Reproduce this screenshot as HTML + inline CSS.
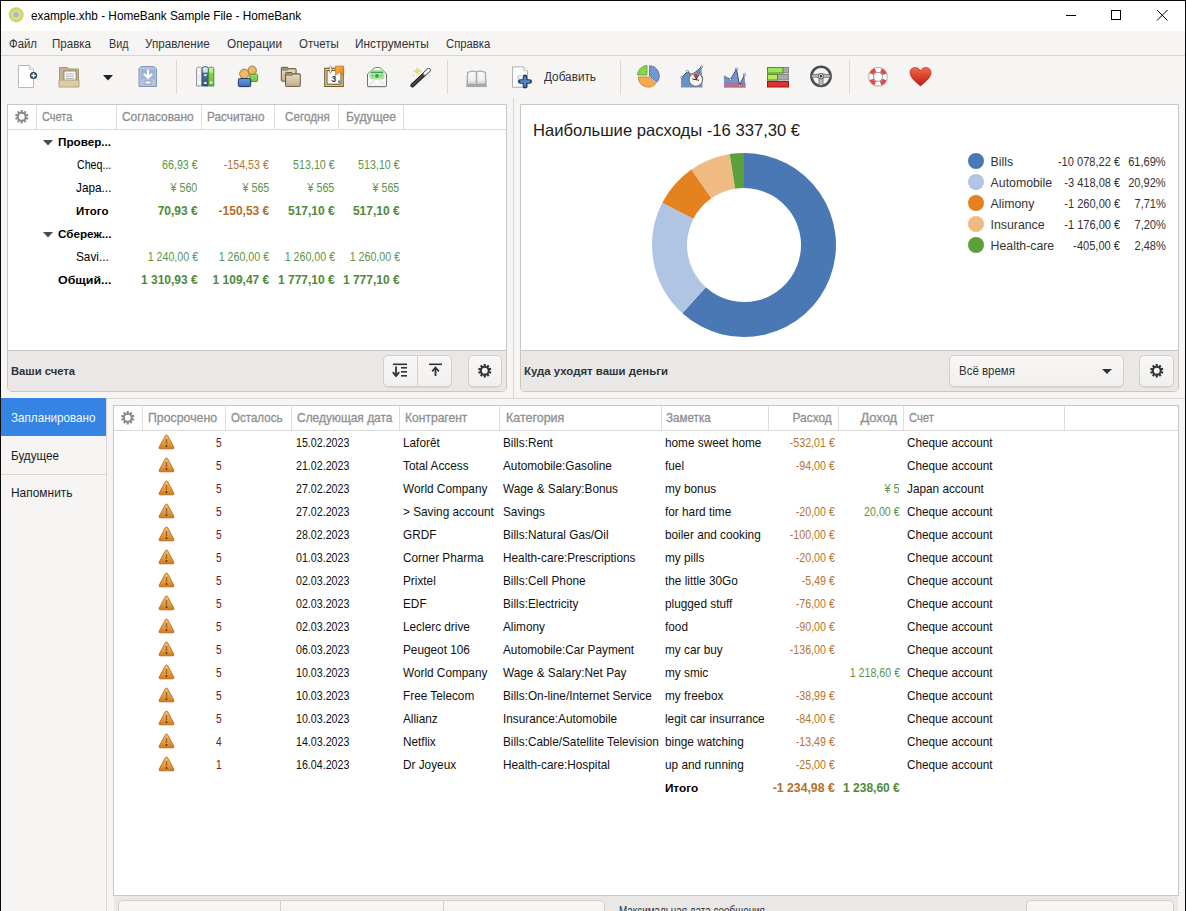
<!DOCTYPE html>
<html><head><meta charset="utf-8"><style>
html,body{margin:0;padding:0;}
body{width:1186px;height:911px;position:relative;overflow:hidden;background:#f6f5f4;font-family:'Liberation Sans', sans-serif;}
.a{position:absolute;}
.t{position:absolute;white-space:nowrap;}
svg.a{overflow:visible;}
</style></head><body>
<div class="a" style="left:0px;top:0px;width:1186px;height:911px;background:#f6f5f4;"></div>
<div class="a" style="left:1px;top:1px;width:1184px;height:30px;background:#ffffff;"></div>
<div class="a" style="left:0px;top:0px;width:1186px;height:1px;background:#0a0a0a;"></div>
<div class="a" style="left:0px;top:0px;width:1px;height:911px;background:#0a0a0a;"></div>
<div class="a" style="left:1185px;top:0px;width:1px;height:911px;background:#0a0a0a;"></div>
<div class="a" style="left:1066px;top:15px;width:10px;height:1px;background:#000;"></div>
<div class="a" style="left:1111px;top:10px;width:10px;height:10px;border:1px solid #000;box-sizing:border-box;"></div>
<svg class="a" style="left:1156px;top:9px" width="13" height="13"><path d="M1 1L11.5 11.5M11.5 1L1 11.5" stroke="#000" stroke-width="1"/></svg>
<div class="a" style="left:1px;top:55px;width:1184px;height:1px;background:#d8d4d0;"></div>
<div class="a" style="left:176px;top:60px;width:1px;height:34px;background:#dddad6;"></div>
<div class="a" style="left:447px;top:60px;width:1px;height:34px;background:#dddad6;"></div>
<div class="a" style="left:620px;top:60px;width:1px;height:34px;background:#dddad6;"></div>
<div class="a" style="left:849px;top:60px;width:1px;height:34px;background:#dddad6;"></div>
<div class="a" style="left:513px;top:98px;width:1px;height:300px;background:#d8d4d0;"></div>
<div class="a" style="left:106px;top:398px;width:1079px;height:1px;background:#d8d4d0;"></div>
<div class="a" style="left:7px;top:104px;width:500px;height:288px;background:#fff;border:1px solid #c9c7c4;box-sizing:border-box;border-radius:0 0 5px 5px;"></div>
<div class="a" style="left:8px;top:350px;width:498px;height:41px;background:#e9e8e7;border-top:1px solid #c9c7c4;box-sizing:border-box;border-radius:0 0 4px 4px"></div>
<div class="a" style="left:8px;top:129px;width:498px;height:1px;background:#d9d9d9;"></div>
<div class="a" style="left:36px;top:105px;width:1px;height:24px;background:#e0dedb;"></div>
<div class="a" style="left:116px;top:105px;width:1px;height:24px;background:#e0dedb;"></div>
<div class="a" style="left:201px;top:105px;width:1px;height:24px;background:#e0dedb;"></div>
<div class="a" style="left:274px;top:105px;width:1px;height:24px;background:#e0dedb;"></div>
<div class="a" style="left:338px;top:105px;width:1px;height:24px;background:#e0dedb;"></div>
<div class="a" style="left:403px;top:105px;width:1px;height:24px;background:#e0dedb;"></div>
<svg class="a" style="left:42.5px;top:140px" width="10" height="5.5"><path d="M0,0 L10,0 L5.0,5.5 Z" fill="#4a4a4a"/></svg>
<svg class="a" style="left:42.5px;top:232px" width="10" height="5.5"><path d="M0,0 L10,0 L5.0,5.5 Z" fill="#4a4a4a"/></svg>
<div class="a" style="left:383px;top:355px;width:69px;height:32px;background:linear-gradient(#f8f7f6,#f1f0ef);border:1px solid #d3cfcb;box-sizing:border-box;border-radius:5px;box-shadow:0 1px 0 rgba(0,0,0,0.07)"></div>
<div class="a" style="left:417px;top:356px;width:1px;height:30px;background:#d3cfcb;"></div>
<div class="a" style="left:468px;top:355px;width:34px;height:32px;background:linear-gradient(#f8f7f6,#f1f0ef);border:1px solid #d3cfcb;box-sizing:border-box;border-radius:5px;box-shadow:0 1px 0 rgba(0,0,0,0.07)"></div>
<div class="a" style="left:520px;top:104px;width:659px;height:288px;background:#fff;border:1px solid #c9c7c4;box-sizing:border-box;border-radius:0 0 5px 5px;"></div>
<div class="a" style="left:521px;top:350px;width:657px;height:41px;background:#e9e8e7;border-top:1px solid #c9c7c4;box-sizing:border-box;border-radius:0 0 4px 4px"></div>
<div class="a" style="left:949px;top:355px;width:175px;height:32px;background:linear-gradient(#f8f7f6,#f1f0ef);border:1px solid #d3cfcb;box-sizing:border-box;border-radius:5px;box-shadow:0 1px 0 rgba(0,0,0,0.07)"></div>
<svg class="a" style="left:1102px;top:369px" width="10" height="5"><path d="M0,0 L10,0 L5,5 Z" fill="#2e3436"/></svg>
<div class="a" style="left:1139px;top:355px;width:35px;height:32px;background:linear-gradient(#f8f7f6,#f1f0ef);border:1px solid #d3cfcb;box-sizing:border-box;border-radius:5px;box-shadow:0 1px 0 rgba(0,0,0,0.07)"></div>
<svg class="a" style="left:652px;top:153px" width="184" height="184"><path d="M92.00,0.00 A92,92 0 1,1 30.34,160.28 L53.80,134.30 A57,57 0 1,0 92.00,35.00 Z" fill="#4a78b4"/><path d="M30.34,160.28 A92,92 0 0,1 10.32,49.67 L41.39,65.77 A57,57 0 0,0 53.80,134.30 Z" fill="#b0c4e4"/><path d="M10.32,49.67 A92,92 0 0,1 39.43,16.50 L59.43,45.22 A57,57 0 0,0 41.39,65.77 Z" fill="#e4821f"/><path d="M39.43,16.50 A92,92 0 0,1 77.72,1.11 L83.15,35.69 A57,57 0 0,0 59.43,45.22 Z" fill="#efbb82"/><path d="M77.72,1.11 A92,92 0 0,1 92.00,0.00 L92.00,35.00 A57,57 0 0,0 83.15,35.69 Z" fill="#5ca03c"/></svg>
<div class="a" style="left:968px;top:152.7px;width:16px;height:16px;background:#4a78b4;border-radius:50%;"></div>
<div class="a" style="left:968px;top:173.79999999999998px;width:16px;height:16px;background:#b0c4e4;border-radius:50%;"></div>
<div class="a" style="left:968px;top:194.89999999999998px;width:16px;height:16px;background:#e4821f;border-radius:50%;"></div>
<div class="a" style="left:968px;top:216.0px;width:16px;height:16px;background:#efbb82;border-radius:50%;"></div>
<div class="a" style="left:968px;top:237.1px;width:16px;height:16px;background:#5ca03c;border-radius:50%;"></div>
<div class="a" style="left:106px;top:399px;width:1px;height:512px;background:#d9d6d2;"></div>
<div class="a" style="left:1px;top:398px;width:105px;height:38px;background:#3584e4;"></div>
<div class="a" style="left:1px;top:474px;width:105px;height:1px;background:#dcd9d5;"></div>
<div class="a" style="left:113px;top:405px;width:1066px;height:491px;background:#fff;border:1px solid #c9c7c4;box-sizing:border-box;"></div>
<div class="a" style="left:114px;top:430px;width:1064px;height:1px;background:#d9d9d9;"></div>
<div class="a" style="left:142px;top:406px;width:1px;height:24px;background:#e0dedb;"></div>
<div class="a" style="left:225px;top:406px;width:1px;height:24px;background:#e0dedb;"></div>
<div class="a" style="left:291px;top:406px;width:1px;height:24px;background:#e0dedb;"></div>
<div class="a" style="left:399px;top:406px;width:1px;height:24px;background:#e0dedb;"></div>
<div class="a" style="left:499px;top:406px;width:1px;height:24px;background:#e0dedb;"></div>
<div class="a" style="left:661px;top:406px;width:1px;height:24px;background:#e0dedb;"></div>
<div class="a" style="left:768px;top:406px;width:1px;height:24px;background:#e0dedb;"></div>
<div class="a" style="left:838px;top:406px;width:1px;height:24px;background:#e0dedb;"></div>
<div class="a" style="left:903px;top:406px;width:1px;height:24px;background:#e0dedb;"></div>
<div class="a" style="left:1064px;top:406px;width:1px;height:24px;background:#e0dedb;"></div>
<svg class="a" style="left:157.5px;top:433.5px" width="17" height="16" viewBox="0 0 17 16">
<defs><linearGradient id="wg" x1="0" y1="0" x2="0" y2="1"><stop offset="0" stop-color="#f7c070"/><stop offset="0.6" stop-color="#e89a3a"/><stop offset="1" stop-color="#d07a20"/></linearGradient></defs>
<path d="M8.5,1 Q9.3,1 9.8,2 L15.8,13.2 Q16.4,14.6 15,14.8 L2,14.8 Q0.6,14.6 1.2,13.2 L7.2,2 Q7.7,1 8.5,1 Z" fill="url(#wg)" stroke="#b8681a" stroke-width="0.9"/>
<rect x="7.8" y="5" width="1.4" height="5" fill="#7a5a3a" opacity="0.8"/><rect x="7.7" y="11.2" width="1.6" height="1.6" fill="#2a2a2a"/></svg>
<svg class="a" style="left:157.5px;top:456.5px" width="17" height="16" viewBox="0 0 17 16">
<defs><linearGradient id="wg" x1="0" y1="0" x2="0" y2="1"><stop offset="0" stop-color="#f7c070"/><stop offset="0.6" stop-color="#e89a3a"/><stop offset="1" stop-color="#d07a20"/></linearGradient></defs>
<path d="M8.5,1 Q9.3,1 9.8,2 L15.8,13.2 Q16.4,14.6 15,14.8 L2,14.8 Q0.6,14.6 1.2,13.2 L7.2,2 Q7.7,1 8.5,1 Z" fill="url(#wg)" stroke="#b8681a" stroke-width="0.9"/>
<rect x="7.8" y="5" width="1.4" height="5" fill="#7a5a3a" opacity="0.8"/><rect x="7.7" y="11.2" width="1.6" height="1.6" fill="#2a2a2a"/></svg>
<svg class="a" style="left:157.5px;top:479.5px" width="17" height="16" viewBox="0 0 17 16">
<defs><linearGradient id="wg" x1="0" y1="0" x2="0" y2="1"><stop offset="0" stop-color="#f7c070"/><stop offset="0.6" stop-color="#e89a3a"/><stop offset="1" stop-color="#d07a20"/></linearGradient></defs>
<path d="M8.5,1 Q9.3,1 9.8,2 L15.8,13.2 Q16.4,14.6 15,14.8 L2,14.8 Q0.6,14.6 1.2,13.2 L7.2,2 Q7.7,1 8.5,1 Z" fill="url(#wg)" stroke="#b8681a" stroke-width="0.9"/>
<rect x="7.8" y="5" width="1.4" height="5" fill="#7a5a3a" opacity="0.8"/><rect x="7.7" y="11.2" width="1.6" height="1.6" fill="#2a2a2a"/></svg>
<svg class="a" style="left:157.5px;top:502.5px" width="17" height="16" viewBox="0 0 17 16">
<defs><linearGradient id="wg" x1="0" y1="0" x2="0" y2="1"><stop offset="0" stop-color="#f7c070"/><stop offset="0.6" stop-color="#e89a3a"/><stop offset="1" stop-color="#d07a20"/></linearGradient></defs>
<path d="M8.5,1 Q9.3,1 9.8,2 L15.8,13.2 Q16.4,14.6 15,14.8 L2,14.8 Q0.6,14.6 1.2,13.2 L7.2,2 Q7.7,1 8.5,1 Z" fill="url(#wg)" stroke="#b8681a" stroke-width="0.9"/>
<rect x="7.8" y="5" width="1.4" height="5" fill="#7a5a3a" opacity="0.8"/><rect x="7.7" y="11.2" width="1.6" height="1.6" fill="#2a2a2a"/></svg>
<svg class="a" style="left:157.5px;top:525.5px" width="17" height="16" viewBox="0 0 17 16">
<defs><linearGradient id="wg" x1="0" y1="0" x2="0" y2="1"><stop offset="0" stop-color="#f7c070"/><stop offset="0.6" stop-color="#e89a3a"/><stop offset="1" stop-color="#d07a20"/></linearGradient></defs>
<path d="M8.5,1 Q9.3,1 9.8,2 L15.8,13.2 Q16.4,14.6 15,14.8 L2,14.8 Q0.6,14.6 1.2,13.2 L7.2,2 Q7.7,1 8.5,1 Z" fill="url(#wg)" stroke="#b8681a" stroke-width="0.9"/>
<rect x="7.8" y="5" width="1.4" height="5" fill="#7a5a3a" opacity="0.8"/><rect x="7.7" y="11.2" width="1.6" height="1.6" fill="#2a2a2a"/></svg>
<svg class="a" style="left:157.5px;top:548.5px" width="17" height="16" viewBox="0 0 17 16">
<defs><linearGradient id="wg" x1="0" y1="0" x2="0" y2="1"><stop offset="0" stop-color="#f7c070"/><stop offset="0.6" stop-color="#e89a3a"/><stop offset="1" stop-color="#d07a20"/></linearGradient></defs>
<path d="M8.5,1 Q9.3,1 9.8,2 L15.8,13.2 Q16.4,14.6 15,14.8 L2,14.8 Q0.6,14.6 1.2,13.2 L7.2,2 Q7.7,1 8.5,1 Z" fill="url(#wg)" stroke="#b8681a" stroke-width="0.9"/>
<rect x="7.8" y="5" width="1.4" height="5" fill="#7a5a3a" opacity="0.8"/><rect x="7.7" y="11.2" width="1.6" height="1.6" fill="#2a2a2a"/></svg>
<svg class="a" style="left:157.5px;top:571.5px" width="17" height="16" viewBox="0 0 17 16">
<defs><linearGradient id="wg" x1="0" y1="0" x2="0" y2="1"><stop offset="0" stop-color="#f7c070"/><stop offset="0.6" stop-color="#e89a3a"/><stop offset="1" stop-color="#d07a20"/></linearGradient></defs>
<path d="M8.5,1 Q9.3,1 9.8,2 L15.8,13.2 Q16.4,14.6 15,14.8 L2,14.8 Q0.6,14.6 1.2,13.2 L7.2,2 Q7.7,1 8.5,1 Z" fill="url(#wg)" stroke="#b8681a" stroke-width="0.9"/>
<rect x="7.8" y="5" width="1.4" height="5" fill="#7a5a3a" opacity="0.8"/><rect x="7.7" y="11.2" width="1.6" height="1.6" fill="#2a2a2a"/></svg>
<svg class="a" style="left:157.5px;top:594.5px" width="17" height="16" viewBox="0 0 17 16">
<defs><linearGradient id="wg" x1="0" y1="0" x2="0" y2="1"><stop offset="0" stop-color="#f7c070"/><stop offset="0.6" stop-color="#e89a3a"/><stop offset="1" stop-color="#d07a20"/></linearGradient></defs>
<path d="M8.5,1 Q9.3,1 9.8,2 L15.8,13.2 Q16.4,14.6 15,14.8 L2,14.8 Q0.6,14.6 1.2,13.2 L7.2,2 Q7.7,1 8.5,1 Z" fill="url(#wg)" stroke="#b8681a" stroke-width="0.9"/>
<rect x="7.8" y="5" width="1.4" height="5" fill="#7a5a3a" opacity="0.8"/><rect x="7.7" y="11.2" width="1.6" height="1.6" fill="#2a2a2a"/></svg>
<svg class="a" style="left:157.5px;top:617.5px" width="17" height="16" viewBox="0 0 17 16">
<defs><linearGradient id="wg" x1="0" y1="0" x2="0" y2="1"><stop offset="0" stop-color="#f7c070"/><stop offset="0.6" stop-color="#e89a3a"/><stop offset="1" stop-color="#d07a20"/></linearGradient></defs>
<path d="M8.5,1 Q9.3,1 9.8,2 L15.8,13.2 Q16.4,14.6 15,14.8 L2,14.8 Q0.6,14.6 1.2,13.2 L7.2,2 Q7.7,1 8.5,1 Z" fill="url(#wg)" stroke="#b8681a" stroke-width="0.9"/>
<rect x="7.8" y="5" width="1.4" height="5" fill="#7a5a3a" opacity="0.8"/><rect x="7.7" y="11.2" width="1.6" height="1.6" fill="#2a2a2a"/></svg>
<svg class="a" style="left:157.5px;top:640.5px" width="17" height="16" viewBox="0 0 17 16">
<defs><linearGradient id="wg" x1="0" y1="0" x2="0" y2="1"><stop offset="0" stop-color="#f7c070"/><stop offset="0.6" stop-color="#e89a3a"/><stop offset="1" stop-color="#d07a20"/></linearGradient></defs>
<path d="M8.5,1 Q9.3,1 9.8,2 L15.8,13.2 Q16.4,14.6 15,14.8 L2,14.8 Q0.6,14.6 1.2,13.2 L7.2,2 Q7.7,1 8.5,1 Z" fill="url(#wg)" stroke="#b8681a" stroke-width="0.9"/>
<rect x="7.8" y="5" width="1.4" height="5" fill="#7a5a3a" opacity="0.8"/><rect x="7.7" y="11.2" width="1.6" height="1.6" fill="#2a2a2a"/></svg>
<svg class="a" style="left:157.5px;top:663.5px" width="17" height="16" viewBox="0 0 17 16">
<defs><linearGradient id="wg" x1="0" y1="0" x2="0" y2="1"><stop offset="0" stop-color="#f7c070"/><stop offset="0.6" stop-color="#e89a3a"/><stop offset="1" stop-color="#d07a20"/></linearGradient></defs>
<path d="M8.5,1 Q9.3,1 9.8,2 L15.8,13.2 Q16.4,14.6 15,14.8 L2,14.8 Q0.6,14.6 1.2,13.2 L7.2,2 Q7.7,1 8.5,1 Z" fill="url(#wg)" stroke="#b8681a" stroke-width="0.9"/>
<rect x="7.8" y="5" width="1.4" height="5" fill="#7a5a3a" opacity="0.8"/><rect x="7.7" y="11.2" width="1.6" height="1.6" fill="#2a2a2a"/></svg>
<svg class="a" style="left:157.5px;top:686.5px" width="17" height="16" viewBox="0 0 17 16">
<defs><linearGradient id="wg" x1="0" y1="0" x2="0" y2="1"><stop offset="0" stop-color="#f7c070"/><stop offset="0.6" stop-color="#e89a3a"/><stop offset="1" stop-color="#d07a20"/></linearGradient></defs>
<path d="M8.5,1 Q9.3,1 9.8,2 L15.8,13.2 Q16.4,14.6 15,14.8 L2,14.8 Q0.6,14.6 1.2,13.2 L7.2,2 Q7.7,1 8.5,1 Z" fill="url(#wg)" stroke="#b8681a" stroke-width="0.9"/>
<rect x="7.8" y="5" width="1.4" height="5" fill="#7a5a3a" opacity="0.8"/><rect x="7.7" y="11.2" width="1.6" height="1.6" fill="#2a2a2a"/></svg>
<svg class="a" style="left:157.5px;top:709.5px" width="17" height="16" viewBox="0 0 17 16">
<defs><linearGradient id="wg" x1="0" y1="0" x2="0" y2="1"><stop offset="0" stop-color="#f7c070"/><stop offset="0.6" stop-color="#e89a3a"/><stop offset="1" stop-color="#d07a20"/></linearGradient></defs>
<path d="M8.5,1 Q9.3,1 9.8,2 L15.8,13.2 Q16.4,14.6 15,14.8 L2,14.8 Q0.6,14.6 1.2,13.2 L7.2,2 Q7.7,1 8.5,1 Z" fill="url(#wg)" stroke="#b8681a" stroke-width="0.9"/>
<rect x="7.8" y="5" width="1.4" height="5" fill="#7a5a3a" opacity="0.8"/><rect x="7.7" y="11.2" width="1.6" height="1.6" fill="#2a2a2a"/></svg>
<svg class="a" style="left:157.5px;top:732.5px" width="17" height="16" viewBox="0 0 17 16">
<defs><linearGradient id="wg" x1="0" y1="0" x2="0" y2="1"><stop offset="0" stop-color="#f7c070"/><stop offset="0.6" stop-color="#e89a3a"/><stop offset="1" stop-color="#d07a20"/></linearGradient></defs>
<path d="M8.5,1 Q9.3,1 9.8,2 L15.8,13.2 Q16.4,14.6 15,14.8 L2,14.8 Q0.6,14.6 1.2,13.2 L7.2,2 Q7.7,1 8.5,1 Z" fill="url(#wg)" stroke="#b8681a" stroke-width="0.9"/>
<rect x="7.8" y="5" width="1.4" height="5" fill="#7a5a3a" opacity="0.8"/><rect x="7.7" y="11.2" width="1.6" height="1.6" fill="#2a2a2a"/></svg>
<svg class="a" style="left:157.5px;top:755.5px" width="17" height="16" viewBox="0 0 17 16">
<defs><linearGradient id="wg" x1="0" y1="0" x2="0" y2="1"><stop offset="0" stop-color="#f7c070"/><stop offset="0.6" stop-color="#e89a3a"/><stop offset="1" stop-color="#d07a20"/></linearGradient></defs>
<path d="M8.5,1 Q9.3,1 9.8,2 L15.8,13.2 Q16.4,14.6 15,14.8 L2,14.8 Q0.6,14.6 1.2,13.2 L7.2,2 Q7.7,1 8.5,1 Z" fill="url(#wg)" stroke="#b8681a" stroke-width="0.9"/>
<rect x="7.8" y="5" width="1.4" height="5" fill="#7a5a3a" opacity="0.8"/><rect x="7.7" y="11.2" width="1.6" height="1.6" fill="#2a2a2a"/></svg>
<div class="a" style="left:114px;top:895px;width:1064px;height:16px;background:#e9e8e7;border-top:1px solid #c9c7c4;box-sizing:border-box"></div>
<div class="a" style="left:117.5px;top:899.5px;width:487.5px;height:20px;background:linear-gradient(#f8f7f6,#f1f0ef);border:1px solid #d3cfcb;box-sizing:border-box;border-radius:5px 5px 0 0;"></div>
<div class="a" style="left:280px;top:900px;width:1px;height:11px;background:#d3cfcb;"></div>
<div class="a" style="left:443px;top:900px;width:1px;height:11px;background:#d3cfcb;"></div>
<div class="a" style="left:1025.7px;top:899.6px;width:148.5999999999999px;height:20px;background:linear-gradient(#f8f7f6,#f1f0ef);border:1px solid #d3cfcb;box-sizing:border-box;border-radius:5px 5px 0 0;"></div>
<svg class="a" style="left:8px;top:7px" width="17" height="17" viewBox="0 0 17 17"><circle cx="8.2" cy="7.8" r="7" fill="#d5d86a" stroke="#c8cc60" stroke-width="1"/><circle cx="8.2" cy="7.8" r="4.2" fill="#e6e8a0"/><circle cx="8.2" cy="7.8" r="3" fill="#b6b2cc"/></svg>
<svg class="a" style="left:17px;top:65px" width="22" height="24" viewBox="0 0 22 24"><path d="M1.5,0.5 L12.5,0.5 L16.5,4.5 L16.5,22.5 L1.5,22.5 Z" fill="#fff" stroke="#b0b0b0" stroke-width="0.9"/><path d="M12.5,0.5 L12.5,4.5 L16.5,4.5" fill="#eee" stroke="#c0c0c0" stroke-width="0.7"/><circle cx="16.5" cy="10.5" r="3.6" fill="#24435f"/><path d="M16.5,8.3V12.7M14.3,10.5H18.7" stroke="#fff" stroke-width="1.4"/></svg>
<svg class="a" style="left:58px;top:66px" width="22" height="22" viewBox="0 0 22 22"><path d="M1.5,1.5 L9.5,1.5 L11,3 L20.5,3 L20.5,20.5 L1.5,20.5 Z" fill="#c4b291" stroke="#a89675" stroke-width="1"/><rect x="6" y="5" width="12" height="10" fill="#fffef9" stroke="#7f7058" stroke-width="0.8"/><path d="M8,8H16M8,10.2H16M8,12.4H16" stroke="#8e8e8e" stroke-width="0.7"/><path d="M1,14 L21,14 L21,21 L1,21 Z" fill="#dccba8" stroke="#b4a27f" stroke-width="1"/></svg>
<svg class="a" style="left:103px;top:75px" width="10" height="6" viewBox="0 0 10 6"><path d="M0,0 L10,0 L5,5.5 Z" fill="#1e1e1e"/></svg>
<svg class="a" style="left:138px;top:65px" width="20" height="23" viewBox="0 0 20 23"><path d="M3,1.5 L16,1.5 L18.5,4 L18.5,21.5 L1,21.5 L1,3.5 Z" fill="#b3c3df" stroke="#8597b6" stroke-width="1"/><rect x="3" y="4.5" width="14" height="9.5" fill="#9fb2d2"/><path d="M10,5.5V12.5M6.5,9.5L10,12.8L13.5,9.5" stroke="#fff" stroke-width="2.2" fill="none" stroke-linecap="round"/><rect x="7" y="16" width="6" height="3" fill="#fff" stroke="#8597b6" stroke-width="0.8"/></svg>
<svg class="a" style="left:195px;top:66px" width="21" height="22" viewBox="0 0 21 22"><defs><linearGradient id="bkb" x1="0" y1="0" x2="0" y2="1"><stop offset="0" stop-color="#e8f0fa"/><stop offset="0.28" stop-color="#c8d8ec"/><stop offset="0.32" stop-color="#4d6f98"/><stop offset="1" stop-color="#3a5a84"/></linearGradient><linearGradient id="bkg" x1="0" y1="0" x2="0" y2="1"><stop offset="0" stop-color="#d8f4c0"/><stop offset="0.28" stop-color="#a8e080"/><stop offset="0.32" stop-color="#86cf55"/><stop offset="1" stop-color="#6ab83e"/></linearGradient></defs><path d="M1.5,20 L1.5,3 Q1.5,1.2 3.5,1.2 L5.5,1.2 Q6.8,1.2 6.8,3 L6.8,20 Z" fill="#ececec" stroke="#8e8e8e" stroke-width="0.9"/><path d="M7.2,20 L7.2,2.5 Q7.2,0.8 9.2,0.8 L11.5,0.8 Q13.3,0.8 13.3,2.5 L13.3,20 Z" fill="url(#bkb)" stroke="#24406a" stroke-width="0.9"/><path d="M13.5,20 L13.5,3 Q13.5,1.2 15.5,1.2 L17.3,1.2 Q18.8,1.2 18.8,3 L18.8,20 Z" fill="url(#bkg)" stroke="#4a8a2a" stroke-width="0.9"/><rect x="2.8" y="2.6" width="2.6" height="1.2" fill="#fff"/><rect x="2.8" y="5.8" width="2.6" height="2.2" fill="#fff"/><rect x="2.8" y="15.5" width="2.6" height="2" fill="#fff"/><rect x="8.8" y="8" width="3" height="2.2" fill="#b8d2f0"/><rect x="8.8" y="16" width="3" height="2" fill="#c8e4fa"/><rect x="14.8" y="15.5" width="2.6" height="2" fill="#e0ffc8"/></svg>
<svg class="a" style="left:237px;top:64px" width="23" height="24" viewBox="0 0 23 24"><defs><radialGradient id="hd" cx="0.45" cy="0.55" r="0.6"><stop offset="0" stop-color="#f6c050"/><stop offset="1" stop-color="#e8b070"/></radialGradient><linearGradient id="bb" x1="0" y1="0" x2="0" y2="1"><stop offset="0" stop-color="#6a9ae0"/><stop offset="1" stop-color="#3a6cc4"/></linearGradient><linearGradient id="gb" x1="0" y1="0" x2="0" y2="1"><stop offset="0" stop-color="#9ae060"/><stop offset="1" stop-color="#6cc830"/></linearGradient></defs><ellipse cx="15.2" cy="6.4" rx="4.2" ry="4.4" fill="url(#hd)" stroke="#8f6a38" stroke-width="0.8"/><rect x="12.8" y="10.2" width="7.8" height="7.3" rx="1" fill="url(#gb)" stroke="#4a8a22" stroke-width="0.9"/><ellipse cx="7.3" cy="9.8" rx="4.7" ry="4.7" fill="url(#hd)" stroke="#8f6a38" stroke-width="0.8"/><rect x="1.4" y="14.6" width="12.3" height="8" rx="1.2" fill="url(#bb)" stroke="#1c365e" stroke-width="1"/></svg>
<svg class="a" style="left:280px;top:66px" width="22" height="22" viewBox="0 0 22 22"><defs><linearGradient id="fg" x1="0" y1="0" x2="0" y2="1"><stop offset="0" stop-color="#e6d8bc"/><stop offset="1" stop-color="#c2b090"/></linearGradient></defs><path d="M1.3,2.3 Q1.3,1.3 2.3,1.3 L7.3,1.3 L8.3,2.6 L15.3,2.6 Q16.1,2.6 16.1,3.5999999999999996 L16.1,14.3 Q16.1,15.200000000000001 15.200000000000001,15.200000000000001 L2.3,15.200000000000001 Q1.3,15.200000000000001 1.3,14.3 Z" fill="#9f8f72" stroke="#5f5240" stroke-width="0.9"/><path d="M2.0,4.8 L7.8,4.8 L8.8,3.5999999999999996 L15.4,3.5999999999999996 L15.4,14.5 L2.0,14.5 Z" fill="url(#fg)"/><path d="M5.5,7.5 Q5.5,6.5 6.5,6.5 L11.5,6.5 L12.5,7.8 L19.5,7.8 Q20.3,7.8 20.3,8.8 L20.3,19.5 Q20.3,20.4 19.4,20.4 L6.5,20.4 Q5.5,20.4 5.5,19.5 Z" fill="#9f8f72" stroke="#5f5240" stroke-width="0.9"/><path d="M6.2,10 L12,10 L13,8.8 L19.6,8.8 L19.6,19.7 L6.2,19.7 Z" fill="url(#fg)"/></svg>
<svg class="a" style="left:323px;top:65px" width="22" height="23" viewBox="0 0 22 23"><defs><linearGradient id="cbm" x1="0" y1="0" x2="1" y2="1"><stop offset="0" stop-color="#f8b848"/><stop offset="1" stop-color="#e87a18"/></linearGradient></defs><rect x="1.8" y="3.3" width="18.4" height="18.1" fill="#f0e2b0" stroke="#6a5020" stroke-width="1.1"/><rect x="4" y="5.5" width="14" height="13.7" fill="#fbfcfa" stroke="#6a5020" stroke-width="1"/><path d="M12.4,1 L20.7,1 L20.7,10.5 L16.6,7.2 L12.4,10.5 Z" fill="url(#cbm)" stroke="#b86a18" stroke-width="0.6"/><ellipse cx="7.5" cy="4.6" rx="1.3" ry="3.6" fill="#f8f4e0" stroke="#6a6a60" stroke-width="0.7"/><text x="8.6" y="16.6" font-family="Liberation Sans" font-size="8.5" font-weight="700" fill="#26344e">3</text><rect x="15" y="15.4" width="2.6" height="2.6" fill="#8a8a8a"/></svg>
<svg class="a" style="left:366px;top:66px" width="23" height="22" viewBox="0 0 23 22"><path d="M1.5,8 L8,2.3 Q9.5,1.5 11,1.5 L12,1.5 Q13.5,1.5 15,2.3 L20.5,8 L20.5,19.5 Q20.5,20.6 19.5,20.6 L2.5,20.6 Q1.5,20.6 1.5,19.5 Z" fill="#fbfbfb" stroke="#6a6a6a" stroke-width="0.9"/><rect x="3.5" y="4" width="15" height="9.5" rx="3.5" fill="#a6e4a2"/><rect x="5" y="5.8" width="12" height="1.1" fill="#3f9a40"/><circle cx="11" cy="9.8" r="1.9" fill="#3f9a40"/><circle cx="6.8" cy="9.8" r="0.6" fill="#2f7a30"/><circle cx="15.2" cy="9.8" r="0.6" fill="#2f7a30"/><path d="M1.5,11.5 L8,16 Q11,17.5 14,16 L20.5,11.5 L20.5,19.5 Q20.5,20.6 19.5,20.6 L2.5,20.6 Q1.5,20.6 1.5,19.5 Z" fill="#f6f6f6"/><path d="M2.5,19.5 L9,14.2 M19.5,19.5 L13,14.2" stroke="#cfcfcf" stroke-width="0.8"/><path d="M1.5,8 L1.5,19.5 Q1.5,20.6 2.5,20.6 L19.5,20.6 Q20.5,20.6 20.5,19.5 L20.5,8" fill="none" stroke="#6a6a6a" stroke-width="0.9"/></svg>
<svg class="a" style="left:409px;top:66px" width="23" height="22" viewBox="0 0 23 22"><path d="M3.3,19.5 L19.8,4" stroke="#1a1a1a" stroke-width="4" stroke-linecap="round"/><path d="M3.3,19.5 L15.5,8" stroke="#4a4a4a" stroke-width="2" stroke-linecap="round"/><path d="M15.8,7.7 L19.8,4" stroke="#6a6a6a" stroke-width="4" stroke-linecap="round"/><path d="M15.8,7.7 L19.8,4" stroke="#fafafa" stroke-width="2.4" stroke-linecap="round"/><path d="M8.5,1.2 Q9,4.3 12.8,5.1 Q9,5.9 8.5,9.2 Q8,5.9 4.2,5.1 Q8,4.3 8.5,1.2 Z" fill="#e6e070" stroke="#d8d080" stroke-width="0.4"/><path d="M4.5,7.8 Q4.7,9.3 6.3,9.6 Q4.7,9.9 4.5,11.4 Q4.3,9.9 2.7,9.6 Q4.3,9.3 4.5,7.8 Z" fill="#e8e490"/><path d="M20.5,8 Q20.7,9.3 22,9.6 Q20.7,9.9 20.5,11.2 Q20.3,9.9 19,9.6 Q20.3,9.3 20.5,8 Z" fill="#c8d8a0"/></svg>
<svg class="a" style="left:465px;top:69px" width="24" height="19" viewBox="0 0 24 19"><defs><linearGradient id="pg" x1="0" y1="0" x2="0" y2="1"><stop offset="0" stop-color="#fafafa"/><stop offset="0.65" stop-color="#f0f0f0"/><stop offset="1" stop-color="#c4c4c4"/></linearGradient></defs><path d="M1.3,17.6 L2,3.2 Q6.5,0.6 11.5,2.2 Q16.5,0.6 21,3.2 L21.7,17.6 Z" fill="#a8a8a8"/><path d="M2.4,15.8 L2.8,3.4 Q7,1.4 11.2,2.8 L11.2,15.8 Q7,14.6 2.4,15.8 Z" fill="url(#pg)" stroke="#9a9a9a" stroke-width="0.7"/><path d="M20.6,15.8 L20.2,3.4 Q16,1.4 11.8,2.8 L11.8,15.8 Q16,14.6 20.6,15.8 Z" fill="url(#pg)" stroke="#9a9a9a" stroke-width="0.7"/><path d="M1.3,17.6 L21.7,17.6" stroke="#9a9a9a" stroke-width="0.8"/></svg>
<svg class="a" style="left:511px;top:66px" width="21" height="23" viewBox="0 0 21 23"><path d="M1.5,0.8 L12.5,0.8 L16.5,4.8 L16.5,21.3 L1.5,21.3 Z" fill="#fbfbfb" stroke="#a9a9a9" stroke-width="0.9"/><path d="M12.5,0.8 L12.5,4.8 L16.5,4.8" fill="#eee" stroke="#b9b9b9" stroke-width="0.7"/><text x="5.5" y="15.5" font-family="Liberation Serif" font-size="11" fill="#bcbcbc">£</text><path d="M14,10.8V20.2M9.3,15.5H18.7" stroke="#1e3c64" stroke-width="4.6" stroke-linecap="round"/><path d="M14,11.5V19.5M10,15.5H18" stroke="#5a86c0" stroke-width="2.4" stroke-linecap="round"/></svg>
<svg class="a" style="left:636px;top:64px" width="25" height="25" viewBox="0 0 25 25"><path d="M11,1.5 A10,10 0 0,0 1.5,11 L11,11 Z" fill="#86d64a" stroke="#5a9a34" stroke-width="0.8"/><path d="M13.5,1.8 A10,10 0 0,1 20.8,18.3 L13.5,12 Z" fill="#6f9ad0" stroke="#4a6890" stroke-width="0.8"/><path d="M2.3,13 L12.8,13 L20,19.4 A10,10 0 0,1 2.3,13 Z" fill="#f6aa4a" stroke="#c08030" stroke-width="0.8"/></svg>
<svg class="a" style="left:680px;top:64px" width="24" height="25" viewBox="0 0 24 25"><path d="M1,13.5 L7.5,7.5 L12,11 L21.5,3 L22.5,23.5 L1,23.5 Z" fill="#6a93c3"/><path d="M1.8,13.5 L7.5,7.5 L12,11 L21.5,3" fill="none" stroke="#2e4a6e" stroke-width="0.9"/><circle cx="1.8" cy="13.5" r="1.1" fill="#fff" stroke="#2e4a6e" stroke-width="0.6"/><circle cx="7.5" cy="7.5" r="1.1" fill="#fff" stroke="#2e4a6e" stroke-width="0.6"/><circle cx="21.5" cy="3" r="1.1" fill="#fff" stroke="#2e4a6e" stroke-width="0.6"/><circle cx="15.8" cy="15.6" r="6.8" fill="#f8f8f8" stroke="#777" stroke-width="1.2"/><path d="M15.8,15.6 L13,10.5 A5.5,5.5 0 0,1 18.5,10.6 Z" fill="#b04a4a"/><path d="M15.8,15.6 L18.8,11 M15.8,15.6 L19,16.3 M12.5,15 L15.8,15.6" stroke="#222" stroke-width="1"/></svg>
<svg class="a" style="left:723px;top:66px" width="25" height="23" viewBox="0 0 25 23"><path d="M1,11 L7.5,13.5 L13.5,3 L16.5,19.5 L21.5,8.5 L22.5,21.5 L1,21.5 Z" fill="#7199d0"/><rect x="1" y="16.5" width="21.5" height="5" fill="#c06a8a" opacity="0.85"/><path d="M2,11 L7.5,13.5 L13.5,3 L16.5,19.5 L21.5,8.5" fill="none" stroke="#2e4a6e" stroke-width="0.9"/><circle cx="2" cy="11" r="1.1" fill="#fff" stroke="#2e4a6e" stroke-width="0.6"/><circle cx="7.5" cy="13.5" r="1.1" fill="#fff" stroke="#2e4a6e" stroke-width="0.6"/><circle cx="13.5" cy="3" r="1.1" fill="#fff" stroke="#2e4a6e" stroke-width="0.6"/><circle cx="16.5" cy="19.5" r="1.1" fill="#fff" stroke="#8a1a3a" stroke-width="0.6"/><circle cx="21.5" cy="8.5" r="1.1" fill="#fff" stroke="#2e4a6e" stroke-width="0.6"/></svg>
<svg class="a" style="left:766px;top:66px" width="24" height="22" viewBox="0 0 24 22"><rect x="1.5" y="1.5" width="21" height="5.5" fill="#a9a9a9" stroke="#777" stroke-width="0.8"/><rect x="1.5" y="1.5" width="15.5" height="5.5" fill="#9be35a" stroke="#4e8f2a" stroke-width="1"/><rect x="1.5" y="8.5" width="21" height="5.5" fill="#a9a9a9" stroke="#777" stroke-width="0.8"/><rect x="1.5" y="8.5" width="10" height="5.5" fill="#b5ea5a" stroke="#4e8f2a" stroke-width="1"/><rect x="1.5" y="15.5" width="21" height="5.5" fill="#e0312a" stroke="#8f1a16" stroke-width="1"/></svg>
<svg class="a" style="left:809px;top:64px" width="24" height="25" viewBox="0 0 24 25"><circle cx="12" cy="12.3" r="9.6" fill="#f3f3f3" stroke="#4c4c4c" stroke-width="2.6"/><path d="M2.5,11 Q12,8.5 21.5,11 L21.5,13.5 Q16,12.5 14,14 L14,21.5 L10,21.5 L10,14 Q8,12.5 2.5,13.5 Z" fill="#bdbdbd" stroke="#5a5a5a" stroke-width="0.7"/><circle cx="12" cy="12.3" r="2.6" fill="#f0f0f0" stroke="#444" stroke-width="0.8"/><circle cx="12" cy="12.3" r="1.2" fill="#333"/></svg>
<svg class="a" style="left:867px;top:65px" width="23" height="24" viewBox="0 0 23 24"><circle cx="11" cy="11.8" r="9.3" fill="#fff" stroke="#999" stroke-width="0.8"/><circle cx="11" cy="11.8" r="7.2" fill="none" stroke="#e04a4a" stroke-width="4.4" stroke-dasharray="5.655 5.655" stroke-dashoffset="-2.83" transform="rotate(0 11 11.8)"/><circle cx="11" cy="11.8" r="4.5" fill="#fff" stroke="#7a7a7a" stroke-width="0.8"/><circle cx="11" cy="11.8" r="10" fill="none" stroke="#f2c890" stroke-width="0.6" opacity="0.6"/></svg>
<svg class="a" style="left:909px;top:66px" width="24" height="22" viewBox="0 0 24 22"><defs><linearGradient id="hg" x1="0" y1="0" x2="0" y2="1"><stop offset="0" stop-color="#f06a4a"/><stop offset="1" stop-color="#c01a10"/></linearGradient></defs><path d="M11.5,20 C5,14.5 1,11 1,6.5 C1,3 3.5,1.5 6.2,1.5 C8.8,1.5 10.5,3.2 11.5,4.8 C12.5,3.2 14.2,1.5 16.8,1.5 C19.5,1.5 22,3 22,6.5 C22,11 18,14.5 11.5,20 Z" fill="url(#hg)" stroke="#a8201a" stroke-width="0.6"/></svg>
<svg class="a" style="left:392px;top:363px" width="16" height="16" viewBox="0 0 16 16"><rect x="1" y="0.5" width="14" height="1.6" fill="#2e3436"/><path d="M4,3.5V12" stroke="#2e3436" stroke-width="1.8"/><path d="M0.8,9.2L4,13L7.2,9.2" fill="none" stroke="#2e3436" stroke-width="1.8"/><rect x="9" y="4" width="6" height="1.6" fill="#2e3436"/><rect x="9" y="8" width="6" height="1.6" fill="#2e3436"/><rect x="9" y="12" width="6" height="1.6" fill="#2e3436"/></svg>
<svg class="a" style="left:428px;top:363px" width="16" height="16" viewBox="0 0 16 16"><rect x="1" y="0.5" width="13" height="1.6" fill="#2e3436"/><path d="M7.5,5V13" stroke="#2e3436" stroke-width="1.8"/><path d="M4.2,8.3L7.5,4.5L10.8,8.3" fill="none" stroke="#2e3436" stroke-width="1.8"/></svg>
<div class="t" style="top:9px;font-size:12px;color:#000;left:31.00px;transform:scaleX(0.983);transform-origin:0 0;">example.xhb - HomeBank Sample File - HomeBank</div>
<div class="t" style="top:37px;font-size:12px;color:#2e3436;left:8.50px;transform:scaleX(0.949);transform-origin:0 0;">Файл</div>
<div class="t" style="top:37px;font-size:12px;color:#2e3436;left:52.30px;transform:scaleX(0.962);transform-origin:0 0;">Правка</div>
<div class="t" style="top:37px;font-size:12px;color:#2e3436;left:108.60px;transform:scaleX(0.893);transform-origin:0 0;">Вид</div>
<div class="t" style="top:37px;font-size:12px;color:#2e3436;left:145.00px;transform:scaleX(0.971);transform-origin:0 0;">Управление</div>
<div class="t" style="top:37px;font-size:12px;color:#2e3436;left:226.50px;transform:scaleX(0.980);transform-origin:0 0;">Операции</div>
<div class="t" style="top:37px;font-size:12px;color:#2e3436;left:298.60px;transform:scaleX(0.955);transform-origin:0 0;">Отчеты</div>
<div class="t" style="top:37px;font-size:12px;color:#2e3436;left:355.40px;transform:scaleX(0.984);transform-origin:0 0;">Инструменты</div>
<div class="t" style="top:37px;font-size:12px;color:#2e3436;left:446.30px;transform:scaleX(0.939);transform-origin:0 0;">Справка</div>
<div class="t" style="top:70px;font-size:12px;color:#2e3436;left:544.00px;transform:scaleX(0.980);transform-origin:0 0;">Добавить</div>
<div class="t" style="top:110px;font-size:12.4px;color:#8f8f8f;-webkit-text-stroke:0.3px #8f8f8f;left:42.40px;transform:scaleX(0.890);transform-origin:0 0;">Счета</div>
<div class="t" style="top:110px;font-size:12.4px;color:#8f8f8f;-webkit-text-stroke:0.3px #8f8f8f;left:122.00px;transform:scaleX(0.962);transform-origin:0 0;">Согласовано</div>
<div class="t" style="top:110px;font-size:12.4px;color:#8f8f8f;-webkit-text-stroke:0.3px #8f8f8f;left:207.20px;transform:scaleX(0.952);transform-origin:0 0;">Расчитано</div>
<div class="t" style="top:110px;font-size:12.4px;color:#8f8f8f;-webkit-text-stroke:0.3px #8f8f8f;left:285.40px;transform:scaleX(0.945);transform-origin:0 0;">Сегодня</div>
<div class="t" style="top:110px;font-size:12.4px;color:#8f8f8f;-webkit-text-stroke:0.3px #8f8f8f;left:346.40px;transform:scaleX(0.984);transform-origin:0 0;">Будущее</div>
<div class="t" style="top:135px;font-size:11.8px;color:#000;font-weight:700;left:58.30px;transform:scaleX(0.991);transform-origin:0 0;">Провер...</div>
<div class="t" style="top:158px;font-size:12.4px;color:#000;left:76.60px;transform:scaleX(0.859);transform-origin:0 0;">Cheq...</div>
<div class="t" style="top:158px;font-size:12.5px;color:#5c9448;left:155.98px;transform:scaleX(0.854);transform-origin:100% 0;">66,93 €</div>
<div class="t" style="top:158px;font-size:12.5px;color:#b5762f;left:216.47px;transform:scaleX(0.854);transform-origin:100% 0;">-154,53 €</div>
<div class="t" style="top:158px;font-size:12.5px;color:#5c9448;left:286.03px;transform:scaleX(0.854);transform-origin:100% 0;">513,10 €</div>
<div class="t" style="top:158px;font-size:12.5px;color:#5c9448;left:350.93px;transform:scaleX(0.854);transform-origin:100% 0;">513,10 €</div>
<div class="t" style="top:181px;font-size:12.4px;color:#000;left:75.70px;transform:scaleX(0.952);transform-origin:0 0;">Japa...</div>
<div class="t" style="top:181px;font-size:12.5px;color:#5c9448;left:166.42px;transform:scaleX(0.854);transform-origin:100% 0;">¥ 560</div>
<div class="t" style="top:181px;font-size:12.5px;color:#5c9448;left:238.02px;transform:scaleX(0.854);transform-origin:100% 0;">¥ 565</div>
<div class="t" style="top:181px;font-size:12.5px;color:#5c9448;left:303.42px;transform:scaleX(0.854);transform-origin:100% 0;">¥ 565</div>
<div class="t" style="top:181px;font-size:12.5px;color:#5c9448;left:368.32px;transform:scaleX(0.854);transform-origin:100% 0;">¥ 565</div>
<div class="t" style="top:204px;font-size:11.8px;color:#000;font-weight:700;left:76.20px;transform:scaleX(0.974);transform-origin:0 0;">Итого</div>
<div class="t" style="top:204px;font-size:12px;color:#4f8a3b;font-weight:700;left:157.65px;">70,93 €</div>
<div class="t" style="top:204px;font-size:12px;color:#b0702c;font-weight:700;left:218.58px;">-150,53 €</div>
<div class="t" style="top:204px;font-size:12px;color:#4f8a3b;font-weight:700;left:287.98px;">517,10 €</div>
<div class="t" style="top:204px;font-size:12px;color:#4f8a3b;font-weight:700;left:352.88px;">517,10 €</div>
<div class="t" style="top:227px;font-size:11.8px;color:#000;font-weight:700;left:58.20px;transform:scaleX(0.988);transform-origin:0 0;">Сбереж...</div>
<div class="t" style="top:250px;font-size:12.4px;color:#000;left:76.20px;transform:scaleX(0.952);transform-origin:0 0;">Savi...</div>
<div class="t" style="top:250px;font-size:12.5px;color:#5c9448;left:138.61px;transform:scaleX(0.854);transform-origin:100% 0;">1 240,00 €</div>
<div class="t" style="top:250px;font-size:12.5px;color:#5c9448;left:210.21px;transform:scaleX(0.854);transform-origin:100% 0;">1 260,00 €</div>
<div class="t" style="top:250px;font-size:12.5px;color:#5c9448;left:275.61px;transform:scaleX(0.854);transform-origin:100% 0;">1 260,00 €</div>
<div class="t" style="top:250px;font-size:12.5px;color:#5c9448;left:340.51px;transform:scaleX(0.854);transform-origin:100% 0;">1 260,00 €</div>
<div class="t" style="top:273px;font-size:11.8px;color:#000;font-weight:700;left:58.20px;transform:scaleX(1.052);transform-origin:0 0;">Общий...</div>
<div class="t" style="top:273px;font-size:12px;color:#4f8a3b;font-weight:700;left:140.98px;">1 310,93 €</div>
<div class="t" style="top:273px;font-size:12px;color:#4f8a3b;font-weight:700;left:212.58px;">1 109,47 €</div>
<div class="t" style="top:273px;font-size:12px;color:#4f8a3b;font-weight:700;left:277.98px;">1 777,10 €</div>
<div class="t" style="top:273px;font-size:12px;color:#4f8a3b;font-weight:700;left:342.88px;">1 777,10 €</div>
<div class="t" style="top:365px;font-size:11.5px;color:#2e3436;font-weight:700;left:10.80px;transform:scaleX(0.977);transform-origin:0 0;">Ваши счета</div>
<div class="t" style="top:121px;font-size:16.5px;color:#1c1c1c;left:533.30px;transform:scaleX(1.007);transform-origin:0 0;">Наибольшие расходы -16 337,30 €</div>
<div class="t" style="top:365px;font-size:11.5px;color:#2e3436;font-weight:700;left:523.80px;transform:scaleX(0.992);transform-origin:0 0;">Куда уходят ваши деньги</div>
<div class="t" style="top:364px;font-size:12.4px;color:#2e3436;left:959.30px;transform:scaleX(0.927);transform-origin:0 0;">Всё время</div>
<div class="t" style="top:155px;font-size:12.3px;color:#333;left:990.60px;">Bills</div>
<div class="t" style="top:155px;font-size:12.3px;color:#333;left:1050.94px;transform:scaleX(0.900);transform-origin:100% 0;">-10 078,22 €</div>
<div class="t" style="top:155px;font-size:12.3px;color:#333;left:1124.28px;transform:scaleX(0.900);transform-origin:100% 0;">61,69%</div>
<div class="t" style="top:176px;font-size:12.3px;color:#333;left:990.60px;">Automobile</div>
<div class="t" style="top:176px;font-size:12.3px;color:#333;left:1057.78px;transform:scaleX(0.900);transform-origin:100% 0;">-3 418,08 €</div>
<div class="t" style="top:176px;font-size:12.3px;color:#333;left:1124.28px;transform:scaleX(0.900);transform-origin:100% 0;">20,92%</div>
<div class="t" style="top:197px;font-size:12.3px;color:#333;left:990.60px;">Alimony</div>
<div class="t" style="top:197px;font-size:12.3px;color:#333;left:1057.78px;transform:scaleX(0.900);transform-origin:100% 0;">-1 260,00 €</div>
<div class="t" style="top:197px;font-size:12.3px;color:#333;left:1131.12px;transform:scaleX(0.900);transform-origin:100% 0;">7,71%</div>
<div class="t" style="top:218px;font-size:12.3px;color:#333;left:990.60px;">Insurance</div>
<div class="t" style="top:218px;font-size:12.3px;color:#333;left:1057.78px;transform:scaleX(0.900);transform-origin:100% 0;">-1 176,00 €</div>
<div class="t" style="top:218px;font-size:12.3px;color:#333;left:1131.12px;transform:scaleX(0.900);transform-origin:100% 0;">7,20%</div>
<div class="t" style="top:239px;font-size:12.3px;color:#333;left:990.60px;">Health-care</div>
<div class="t" style="top:239px;font-size:12.3px;color:#333;left:1068.03px;transform:scaleX(0.900);transform-origin:100% 0;">-405,00 €</div>
<div class="t" style="top:239px;font-size:12.3px;color:#333;left:1131.12px;transform:scaleX(0.900);transform-origin:100% 0;">2,48%</div>
<div class="t" style="top:411px;font-size:12.4px;color:#f4f9ff;left:10.70px;transform:scaleX(0.941);transform-origin:0 0;">Запланировано</div>
<div class="t" style="top:449px;font-size:12.4px;color:#1a1a1a;left:10.70px;transform:scaleX(0.943);transform-origin:0 0;">Будущее</div>
<div class="t" style="top:486px;font-size:12.4px;color:#1a1a1a;left:10.70px;transform:scaleX(0.963);transform-origin:0 0;">Напомнить</div>
<div class="t" style="top:411px;font-size:12.4px;color:#8f8f8f;-webkit-text-stroke:0.3px #8f8f8f;left:148.40px;transform:scaleX(0.994);transform-origin:0 0;">Просрочено</div>
<div class="t" style="top:411px;font-size:12.4px;color:#8f8f8f;-webkit-text-stroke:0.3px #8f8f8f;left:231.40px;transform:scaleX(0.932);transform-origin:0 0;">Осталось</div>
<div class="t" style="top:411px;font-size:12.4px;color:#8f8f8f;-webkit-text-stroke:0.3px #8f8f8f;left:296.50px;transform:scaleX(0.964);transform-origin:0 0;">Следующая дата</div>
<div class="t" style="top:411px;font-size:12.4px;color:#8f8f8f;-webkit-text-stroke:0.3px #8f8f8f;left:405.30px;transform:scaleX(0.974);transform-origin:0 0;">Контрагент</div>
<div class="t" style="top:411px;font-size:12.4px;color:#8f8f8f;-webkit-text-stroke:0.3px #8f8f8f;left:505.50px;transform:scaleX(1.006);transform-origin:0 0;">Категория</div>
<div class="t" style="top:411px;font-size:12.4px;color:#8f8f8f;-webkit-text-stroke:0.3px #8f8f8f;left:666.40px;transform:scaleX(0.940);transform-origin:0 0;">Заметка</div>
<div class="t" style="top:411px;font-size:12.4px;color:#8f8f8f;-webkit-text-stroke:0.3px #8f8f8f;left:790.86px;transform:scaleX(0.965);transform-origin:100% 0;">Расход</div>
<div class="t" style="top:411px;font-size:12.4px;color:#8f8f8f;-webkit-text-stroke:0.3px #8f8f8f;left:861.61px;transform:scaleX(1.046);transform-origin:100% 0;">Доход</div>
<div class="t" style="top:411px;font-size:12.4px;color:#8f8f8f;-webkit-text-stroke:0.3px #8f8f8f;left:909.10px;transform:scaleX(0.908);transform-origin:0 0;">Счет</div>
<div class="t" style="top:436px;font-size:12px;color:#6a2020;left:215.11px;transform:scaleX(0.850);transform-origin:100% 0;">5</div>
<div class="t" style="top:436px;font-size:12.5px;color:#111;left:295.90px;transform:scaleX(0.854);transform-origin:0 0;">15.02.2023</div>
<div class="t" style="top:436px;font-size:12.4px;color:#111;left:403.10px;transform:scaleX(0.952);transform-origin:0 0;">Laforêt</div>
<div class="t" style="top:436px;font-size:12.4px;color:#111;left:503.30px;transform:scaleX(0.952);transform-origin:0 0;">Bills:Rent</div>
<div class="t" style="top:436px;font-size:12.4px;color:#111;left:664.50px;transform:scaleX(0.952);transform-origin:0 0;">home sweet home</div>
<div class="t" style="top:436px;font-size:12.5px;color:#b5762f;left:781.97px;transform:scaleX(0.854);transform-origin:100% 0;">-532,01 €</div>
<div class="t" style="top:436px;font-size:12.4px;color:#111;left:907.40px;transform:scaleX(0.948);transform-origin:0 0;">Cheque account</div>
<div class="t" style="top:459px;font-size:12px;color:#6a2020;left:215.11px;transform:scaleX(0.850);transform-origin:100% 0;">5</div>
<div class="t" style="top:459px;font-size:12.5px;color:#111;left:295.90px;transform:scaleX(0.854);transform-origin:0 0;">21.02.2023</div>
<div class="t" style="top:459px;font-size:12.4px;color:#111;left:403.10px;transform:scaleX(0.952);transform-origin:0 0;">Total Access</div>
<div class="t" style="top:459px;font-size:12.4px;color:#111;left:503.30px;transform:scaleX(0.952);transform-origin:0 0;">Automobile:Gasoline</div>
<div class="t" style="top:459px;font-size:12.4px;color:#111;left:664.50px;transform:scaleX(0.952);transform-origin:0 0;">fuel</div>
<div class="t" style="top:459px;font-size:12.5px;color:#b5762f;left:788.92px;transform:scaleX(0.854);transform-origin:100% 0;">-94,00 €</div>
<div class="t" style="top:459px;font-size:12.4px;color:#111;left:907.40px;transform:scaleX(0.948);transform-origin:0 0;">Cheque account</div>
<div class="t" style="top:482px;font-size:12px;color:#6a2020;left:215.11px;transform:scaleX(0.850);transform-origin:100% 0;">5</div>
<div class="t" style="top:482px;font-size:12.5px;color:#111;left:295.90px;transform:scaleX(0.854);transform-origin:0 0;">27.02.2023</div>
<div class="t" style="top:482px;font-size:12.4px;color:#111;left:403.10px;transform:scaleX(0.952);transform-origin:0 0;">World Company</div>
<div class="t" style="top:482px;font-size:12.4px;color:#111;left:503.30px;transform:scaleX(0.952);transform-origin:0 0;">Wage &amp; Salary:Bonus</div>
<div class="t" style="top:482px;font-size:12.4px;color:#111;left:664.50px;transform:scaleX(0.952);transform-origin:0 0;">my bonus</div>
<div class="t" style="top:482px;font-size:12.5px;color:#5c9448;left:882.41px;transform:scaleX(0.854);transform-origin:100% 0;">¥ 5</div>
<div class="t" style="top:482px;font-size:12.4px;color:#111;left:907.40px;transform:scaleX(0.952);transform-origin:0 0;">Japan account</div>
<div class="t" style="top:505px;font-size:12px;color:#6a2020;left:215.11px;transform:scaleX(0.850);transform-origin:100% 0;">5</div>
<div class="t" style="top:505px;font-size:12.5px;color:#111;left:295.90px;transform:scaleX(0.854);transform-origin:0 0;">27.02.2023</div>
<div class="t" style="top:505px;font-size:12.4px;color:#111;left:403.10px;transform:scaleX(0.952);transform-origin:0 0;">&gt; Saving account</div>
<div class="t" style="top:505px;font-size:12.4px;color:#111;left:503.30px;transform:scaleX(0.952);transform-origin:0 0;">Savings</div>
<div class="t" style="top:505px;font-size:12.4px;color:#111;left:664.50px;transform:scaleX(0.952);transform-origin:0 0;">for hard time</div>
<div class="t" style="top:505px;font-size:12.5px;color:#b5762f;left:788.92px;transform:scaleX(0.854);transform-origin:100% 0;">-20,00 €</div>
<div class="t" style="top:505px;font-size:12.5px;color:#5c9448;left:858.08px;transform:scaleX(0.854);transform-origin:100% 0;">20,00 €</div>
<div class="t" style="top:505px;font-size:12.4px;color:#111;left:907.40px;transform:scaleX(0.948);transform-origin:0 0;">Cheque account</div>
<div class="t" style="top:528px;font-size:12px;color:#6a2020;left:215.11px;transform:scaleX(0.850);transform-origin:100% 0;">5</div>
<div class="t" style="top:528px;font-size:12.5px;color:#111;left:295.90px;transform:scaleX(0.854);transform-origin:0 0;">28.02.2023</div>
<div class="t" style="top:528px;font-size:12.4px;color:#111;left:403.10px;transform:scaleX(0.952);transform-origin:0 0;">GRDF</div>
<div class="t" style="top:528px;font-size:12.4px;color:#111;left:503.30px;transform:scaleX(0.952);transform-origin:0 0;">Bills:Natural Gas/Oil</div>
<div class="t" style="top:528px;font-size:12.4px;color:#111;left:664.50px;transform:scaleX(0.952);transform-origin:0 0;">boiler and cooking</div>
<div class="t" style="top:528px;font-size:12.5px;color:#b5762f;left:781.97px;transform:scaleX(0.854);transform-origin:100% 0;">-100,00 €</div>
<div class="t" style="top:528px;font-size:12.4px;color:#111;left:907.40px;transform:scaleX(0.948);transform-origin:0 0;">Cheque account</div>
<div class="t" style="top:551px;font-size:12px;color:#6a2020;left:215.11px;transform:scaleX(0.850);transform-origin:100% 0;">5</div>
<div class="t" style="top:551px;font-size:12.5px;color:#111;left:295.90px;transform:scaleX(0.854);transform-origin:0 0;">01.03.2023</div>
<div class="t" style="top:551px;font-size:12.4px;color:#111;left:403.10px;transform:scaleX(0.952);transform-origin:0 0;">Corner Pharma</div>
<div class="t" style="top:551px;font-size:12.4px;color:#111;left:503.30px;transform:scaleX(0.952);transform-origin:0 0;">Health-care:Prescriptions</div>
<div class="t" style="top:551px;font-size:12.4px;color:#111;left:664.50px;transform:scaleX(0.952);transform-origin:0 0;">my pills</div>
<div class="t" style="top:551px;font-size:12.5px;color:#b5762f;left:788.92px;transform:scaleX(0.854);transform-origin:100% 0;">-20,00 €</div>
<div class="t" style="top:551px;font-size:12.4px;color:#111;left:907.40px;transform:scaleX(0.948);transform-origin:0 0;">Cheque account</div>
<div class="t" style="top:574px;font-size:12px;color:#6a2020;left:215.11px;transform:scaleX(0.850);transform-origin:100% 0;">5</div>
<div class="t" style="top:574px;font-size:12.5px;color:#111;left:295.90px;transform:scaleX(0.854);transform-origin:0 0;">02.03.2023</div>
<div class="t" style="top:574px;font-size:12.4px;color:#111;left:403.10px;transform:scaleX(0.952);transform-origin:0 0;">Prixtel</div>
<div class="t" style="top:574px;font-size:12.4px;color:#111;left:503.30px;transform:scaleX(0.952);transform-origin:0 0;">Bills:Cell Phone</div>
<div class="t" style="top:574px;font-size:12.4px;color:#111;left:664.50px;transform:scaleX(0.952);transform-origin:0 0;">the little 30Go</div>
<div class="t" style="top:574px;font-size:12.5px;color:#b5762f;left:795.88px;transform:scaleX(0.854);transform-origin:100% 0;">-5,49 €</div>
<div class="t" style="top:574px;font-size:12.4px;color:#111;left:907.40px;transform:scaleX(0.948);transform-origin:0 0;">Cheque account</div>
<div class="t" style="top:597px;font-size:12px;color:#6a2020;left:215.11px;transform:scaleX(0.850);transform-origin:100% 0;">5</div>
<div class="t" style="top:597px;font-size:12.5px;color:#111;left:295.90px;transform:scaleX(0.854);transform-origin:0 0;">02.03.2023</div>
<div class="t" style="top:597px;font-size:12.4px;color:#111;left:403.10px;transform:scaleX(0.952);transform-origin:0 0;">EDF</div>
<div class="t" style="top:597px;font-size:12.4px;color:#111;left:503.30px;transform:scaleX(0.952);transform-origin:0 0;">Bills:Electricity</div>
<div class="t" style="top:597px;font-size:12.4px;color:#111;left:664.50px;transform:scaleX(0.952);transform-origin:0 0;">plugged stuff</div>
<div class="t" style="top:597px;font-size:12.5px;color:#b5762f;left:788.92px;transform:scaleX(0.854);transform-origin:100% 0;">-76,00 €</div>
<div class="t" style="top:597px;font-size:12.4px;color:#111;left:907.40px;transform:scaleX(0.948);transform-origin:0 0;">Cheque account</div>
<div class="t" style="top:620px;font-size:12px;color:#6a2020;left:215.11px;transform:scaleX(0.850);transform-origin:100% 0;">5</div>
<div class="t" style="top:620px;font-size:12.5px;color:#111;left:295.90px;transform:scaleX(0.854);transform-origin:0 0;">02.03.2023</div>
<div class="t" style="top:620px;font-size:12.4px;color:#111;left:403.10px;transform:scaleX(0.952);transform-origin:0 0;">Leclerc drive</div>
<div class="t" style="top:620px;font-size:12.4px;color:#111;left:503.30px;transform:scaleX(0.952);transform-origin:0 0;">Alimony</div>
<div class="t" style="top:620px;font-size:12.4px;color:#111;left:664.50px;transform:scaleX(0.952);transform-origin:0 0;">food</div>
<div class="t" style="top:620px;font-size:12.5px;color:#b5762f;left:788.92px;transform:scaleX(0.854);transform-origin:100% 0;">-90,00 €</div>
<div class="t" style="top:620px;font-size:12.4px;color:#111;left:907.40px;transform:scaleX(0.948);transform-origin:0 0;">Cheque account</div>
<div class="t" style="top:643px;font-size:12px;color:#6a2020;left:215.11px;transform:scaleX(0.850);transform-origin:100% 0;">5</div>
<div class="t" style="top:643px;font-size:12.5px;color:#111;left:295.90px;transform:scaleX(0.854);transform-origin:0 0;">06.03.2023</div>
<div class="t" style="top:643px;font-size:12.4px;color:#111;left:403.10px;transform:scaleX(0.952);transform-origin:0 0;">Peugeot 106</div>
<div class="t" style="top:643px;font-size:12.4px;color:#111;left:503.30px;transform:scaleX(0.952);transform-origin:0 0;">Automobile:Car Payment</div>
<div class="t" style="top:643px;font-size:12.4px;color:#111;left:664.50px;transform:scaleX(0.952);transform-origin:0 0;">my car buy</div>
<div class="t" style="top:643px;font-size:12.5px;color:#b5762f;left:781.97px;transform:scaleX(0.854);transform-origin:100% 0;">-136,00 €</div>
<div class="t" style="top:643px;font-size:12.4px;color:#111;left:907.40px;transform:scaleX(0.948);transform-origin:0 0;">Cheque account</div>
<div class="t" style="top:666px;font-size:12px;color:#6a2020;left:215.11px;transform:scaleX(0.850);transform-origin:100% 0;">5</div>
<div class="t" style="top:666px;font-size:12.5px;color:#111;left:295.90px;transform:scaleX(0.854);transform-origin:0 0;">10.03.2023</div>
<div class="t" style="top:666px;font-size:12.4px;color:#111;left:403.10px;transform:scaleX(0.952);transform-origin:0 0;">World Company</div>
<div class="t" style="top:666px;font-size:12.4px;color:#111;left:503.30px;transform:scaleX(0.952);transform-origin:0 0;">Wage &amp; Salary:Net Pay</div>
<div class="t" style="top:666px;font-size:12.4px;color:#111;left:664.50px;transform:scaleX(0.952);transform-origin:0 0;">my smic</div>
<div class="t" style="top:666px;font-size:12.5px;color:#5c9448;left:840.71px;transform:scaleX(0.854);transform-origin:100% 0;">1 218,60 €</div>
<div class="t" style="top:666px;font-size:12.4px;color:#111;left:907.40px;transform:scaleX(0.948);transform-origin:0 0;">Cheque account</div>
<div class="t" style="top:689px;font-size:12px;color:#6a2020;left:215.11px;transform:scaleX(0.850);transform-origin:100% 0;">5</div>
<div class="t" style="top:689px;font-size:12.5px;color:#111;left:295.90px;transform:scaleX(0.854);transform-origin:0 0;">10.03.2023</div>
<div class="t" style="top:689px;font-size:12.4px;color:#111;left:403.10px;transform:scaleX(0.952);transform-origin:0 0;">Free Telecom</div>
<div class="t" style="top:689px;font-size:12.4px;color:#111;left:503.30px;transform:scaleX(0.952);transform-origin:0 0;">Bills:On-line/Internet Service</div>
<div class="t" style="top:689px;font-size:12.4px;color:#111;left:664.50px;transform:scaleX(0.952);transform-origin:0 0;">my freebox</div>
<div class="t" style="top:689px;font-size:12.5px;color:#b5762f;left:788.92px;transform:scaleX(0.854);transform-origin:100% 0;">-38,99 €</div>
<div class="t" style="top:689px;font-size:12.4px;color:#111;left:907.40px;transform:scaleX(0.948);transform-origin:0 0;">Cheque account</div>
<div class="t" style="top:712px;font-size:12px;color:#6a2020;left:215.11px;transform:scaleX(0.850);transform-origin:100% 0;">5</div>
<div class="t" style="top:712px;font-size:12.5px;color:#111;left:295.90px;transform:scaleX(0.854);transform-origin:0 0;">10.03.2023</div>
<div class="t" style="top:712px;font-size:12.4px;color:#111;left:403.10px;transform:scaleX(0.952);transform-origin:0 0;">Allianz</div>
<div class="t" style="top:712px;font-size:12.4px;color:#111;left:503.30px;transform:scaleX(0.952);transform-origin:0 0;">Insurance:Automobile</div>
<div class="t" style="top:712px;font-size:12.4px;color:#111;left:664.50px;transform:scaleX(0.952);transform-origin:0 0;">legit car insurrance</div>
<div class="t" style="top:712px;font-size:12.5px;color:#b5762f;left:788.92px;transform:scaleX(0.854);transform-origin:100% 0;">-84,00 €</div>
<div class="t" style="top:712px;font-size:12.4px;color:#111;left:907.40px;transform:scaleX(0.948);transform-origin:0 0;">Cheque account</div>
<div class="t" style="top:735px;font-size:12px;color:#6a2020;left:215.11px;transform:scaleX(0.850);transform-origin:100% 0;">4</div>
<div class="t" style="top:735px;font-size:12.5px;color:#111;left:295.90px;transform:scaleX(0.854);transform-origin:0 0;">14.03.2023</div>
<div class="t" style="top:735px;font-size:12.4px;color:#111;left:403.10px;transform:scaleX(0.952);transform-origin:0 0;">Netflix</div>
<div class="t" style="top:735px;font-size:12.4px;color:#111;left:503.30px;transform:scaleX(0.952);transform-origin:0 0;">Bills:Cable/Satellite Television</div>
<div class="t" style="top:735px;font-size:12.4px;color:#111;left:664.50px;transform:scaleX(0.952);transform-origin:0 0;">binge watching</div>
<div class="t" style="top:735px;font-size:12.5px;color:#b5762f;left:788.92px;transform:scaleX(0.854);transform-origin:100% 0;">-13,49 €</div>
<div class="t" style="top:735px;font-size:12.4px;color:#111;left:907.40px;transform:scaleX(0.948);transform-origin:0 0;">Cheque account</div>
<div class="t" style="top:758px;font-size:12px;color:#6a2020;left:215.11px;transform:scaleX(0.850);transform-origin:100% 0;">1</div>
<div class="t" style="top:758px;font-size:12.5px;color:#111;left:295.90px;transform:scaleX(0.854);transform-origin:0 0;">16.04.2023</div>
<div class="t" style="top:758px;font-size:12.4px;color:#111;left:403.10px;transform:scaleX(0.952);transform-origin:0 0;">Dr Joyeux</div>
<div class="t" style="top:758px;font-size:12.4px;color:#111;left:503.30px;transform:scaleX(0.952);transform-origin:0 0;">Health-care:Hospital</div>
<div class="t" style="top:758px;font-size:12.4px;color:#111;left:664.50px;transform:scaleX(0.952);transform-origin:0 0;">up and running</div>
<div class="t" style="top:758px;font-size:12.5px;color:#b5762f;left:788.92px;transform:scaleX(0.854);transform-origin:100% 0;">-25,00 €</div>
<div class="t" style="top:758px;font-size:12.4px;color:#111;left:907.40px;transform:scaleX(0.948);transform-origin:0 0;">Cheque account</div>
<div class="t" style="top:781px;font-size:11.8px;color:#000;font-weight:700;left:664.90px;">Итого</div>
<div class="t" style="top:781px;font-size:12px;color:#b0702c;font-weight:700;left:774.08px;transform:scaleX(1.021);transform-origin:100% 0;">-1 234,98 €</div>
<div class="t" style="top:781px;font-size:12px;color:#4f8a3b;font-weight:700;left:843.08px;">1 238,60 €</div>
<div class="t" style="top:904px;font-size:12.4px;color:#2e3436;left:619.30px;transform:scaleX(0.796);transform-origin:0 0;">Максимальная дата сообщения</div>
<svg class="a" style="left:15.05px;top:110.15px" width="13.5" height="13.5"><path d="M5.70,1.94 L5.70,0.08 L7.80,0.08 L7.80,1.94 L8.04,1.99 L8.27,2.06 L8.50,2.14 L8.73,2.24 L9.82,0.74 L11.52,1.97 L10.43,3.47 L10.59,3.66 L10.74,3.85 L10.87,4.05 L11.00,4.26 L12.77,3.69 L13.42,5.69 L11.65,6.26 L11.67,6.51 L11.68,6.75 L11.67,6.99 L11.65,7.24 L13.42,7.81 L12.77,9.81 L11.00,9.24 L10.87,9.45 L10.74,9.65 L10.59,9.84 L10.43,10.03 L11.52,11.53 L9.82,12.76 L8.73,11.26 L8.50,11.36 L8.27,11.44 L8.04,11.51 L7.80,11.56 L7.80,13.42 L5.70,13.42 L5.70,11.56 L5.46,11.51 L5.23,11.44 L5.00,11.36 L4.77,11.26 L3.68,12.76 L1.98,11.53 L3.07,10.03 L2.91,9.84 L2.76,9.65 L2.63,9.45 L2.50,9.24 L0.73,9.81 L0.08,7.81 L1.85,7.24 L1.83,6.99 L1.82,6.75 L1.83,6.51 L1.85,6.26 L0.08,5.69 L0.73,3.69 L2.50,4.26 L2.63,4.05 L2.76,3.85 L2.91,3.66 L3.07,3.47 L1.98,1.97 L3.68,0.74 L4.77,2.24 L5.00,2.14 L5.23,2.06 L5.46,1.99 Z M9.65,6.75 A2.9025,2.9025 0 1,0 3.85,6.75 A2.9025,2.9025 0 1,0 9.65,6.75 Z" fill="#8a8a8a" fill-rule="evenodd"/></svg>
<svg class="a" style="left:478.25px;top:364.25px" width="13.5" height="13.5"><path d="M5.70,1.94 L5.70,0.08 L7.80,0.08 L7.80,1.94 L8.04,1.99 L8.27,2.06 L8.50,2.14 L8.73,2.24 L9.82,0.74 L11.52,1.97 L10.43,3.47 L10.59,3.66 L10.74,3.85 L10.87,4.05 L11.00,4.26 L12.77,3.69 L13.42,5.69 L11.65,6.26 L11.67,6.51 L11.68,6.75 L11.67,6.99 L11.65,7.24 L13.42,7.81 L12.77,9.81 L11.00,9.24 L10.87,9.45 L10.74,9.65 L10.59,9.84 L10.43,10.03 L11.52,11.53 L9.82,12.76 L8.73,11.26 L8.50,11.36 L8.27,11.44 L8.04,11.51 L7.80,11.56 L7.80,13.42 L5.70,13.42 L5.70,11.56 L5.46,11.51 L5.23,11.44 L5.00,11.36 L4.77,11.26 L3.68,12.76 L1.98,11.53 L3.07,10.03 L2.91,9.84 L2.76,9.65 L2.63,9.45 L2.50,9.24 L0.73,9.81 L0.08,7.81 L1.85,7.24 L1.83,6.99 L1.82,6.75 L1.83,6.51 L1.85,6.26 L0.08,5.69 L0.73,3.69 L2.50,4.26 L2.63,4.05 L2.76,3.85 L2.91,3.66 L3.07,3.47 L1.98,1.97 L3.68,0.74 L4.77,2.24 L5.00,2.14 L5.23,2.06 L5.46,1.99 Z M9.65,6.75 A2.9025,2.9025 0 1,0 3.85,6.75 A2.9025,2.9025 0 1,0 9.65,6.75 Z" fill="#2e3436" fill-rule="evenodd"/></svg>
<svg class="a" style="left:1150.25px;top:364.25px" width="13.5" height="13.5"><path d="M5.70,1.94 L5.70,0.08 L7.80,0.08 L7.80,1.94 L8.04,1.99 L8.27,2.06 L8.50,2.14 L8.73,2.24 L9.82,0.74 L11.52,1.97 L10.43,3.47 L10.59,3.66 L10.74,3.85 L10.87,4.05 L11.00,4.26 L12.77,3.69 L13.42,5.69 L11.65,6.26 L11.67,6.51 L11.68,6.75 L11.67,6.99 L11.65,7.24 L13.42,7.81 L12.77,9.81 L11.00,9.24 L10.87,9.45 L10.74,9.65 L10.59,9.84 L10.43,10.03 L11.52,11.53 L9.82,12.76 L8.73,11.26 L8.50,11.36 L8.27,11.44 L8.04,11.51 L7.80,11.56 L7.80,13.42 L5.70,13.42 L5.70,11.56 L5.46,11.51 L5.23,11.44 L5.00,11.36 L4.77,11.26 L3.68,12.76 L1.98,11.53 L3.07,10.03 L2.91,9.84 L2.76,9.65 L2.63,9.45 L2.50,9.24 L0.73,9.81 L0.08,7.81 L1.85,7.24 L1.83,6.99 L1.82,6.75 L1.83,6.51 L1.85,6.26 L0.08,5.69 L0.73,3.69 L2.50,4.26 L2.63,4.05 L2.76,3.85 L2.91,3.66 L3.07,3.47 L1.98,1.97 L3.68,0.74 L4.77,2.24 L5.00,2.14 L5.23,2.06 L5.46,1.99 Z M9.65,6.75 A2.9025,2.9025 0 1,0 3.85,6.75 A2.9025,2.9025 0 1,0 9.65,6.75 Z" fill="#2e3436" fill-rule="evenodd"/></svg>
<svg class="a" style="left:120.55px;top:411.15px" width="13.5" height="13.5"><path d="M5.70,1.94 L5.70,0.08 L7.80,0.08 L7.80,1.94 L8.04,1.99 L8.27,2.06 L8.50,2.14 L8.73,2.24 L9.82,0.74 L11.52,1.97 L10.43,3.47 L10.59,3.66 L10.74,3.85 L10.87,4.05 L11.00,4.26 L12.77,3.69 L13.42,5.69 L11.65,6.26 L11.67,6.51 L11.68,6.75 L11.67,6.99 L11.65,7.24 L13.42,7.81 L12.77,9.81 L11.00,9.24 L10.87,9.45 L10.74,9.65 L10.59,9.84 L10.43,10.03 L11.52,11.53 L9.82,12.76 L8.73,11.26 L8.50,11.36 L8.27,11.44 L8.04,11.51 L7.80,11.56 L7.80,13.42 L5.70,13.42 L5.70,11.56 L5.46,11.51 L5.23,11.44 L5.00,11.36 L4.77,11.26 L3.68,12.76 L1.98,11.53 L3.07,10.03 L2.91,9.84 L2.76,9.65 L2.63,9.45 L2.50,9.24 L0.73,9.81 L0.08,7.81 L1.85,7.24 L1.83,6.99 L1.82,6.75 L1.83,6.51 L1.85,6.26 L0.08,5.69 L0.73,3.69 L2.50,4.26 L2.63,4.05 L2.76,3.85 L2.91,3.66 L3.07,3.47 L1.98,1.97 L3.68,0.74 L4.77,2.24 L5.00,2.14 L5.23,2.06 L5.46,1.99 Z M9.65,6.75 A2.9025,2.9025 0 1,0 3.85,6.75 A2.9025,2.9025 0 1,0 9.65,6.75 Z" fill="#8a8a8a" fill-rule="evenodd"/></svg>
</body></html>
